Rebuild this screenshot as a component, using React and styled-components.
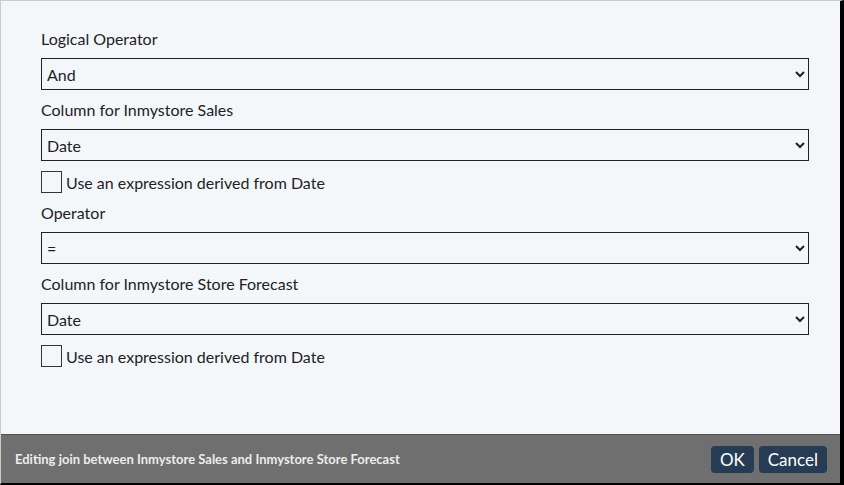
import React from "react"
import styled, { createGlobalStyle } from "styled-components"

const GlobalStyle = createGlobalStyle`
  html, body {
    margin: 0;
    padding: 0;
    background: #f3f7fa;
  }
  * {
    box-sizing: border-box;
  }
`

const fields = [
  { label: "Logical Operator", value: "And" },
  { label: "Column for Inmystore Sales", value: "Date", expression: true },
  { label: "Operator", value: "=" },
  { label: "Column for Inmystore Store Forecast", value: "Date", expression: true },
]

function App() {
  return (
    <>
      <GlobalStyle />
      <Frame>
        <Content>
          {fields.map((f, i) => (
            <React.Fragment key={i}>
              <Label>{f.label}</Label>
              <Select defaultValue={f.value}>
                <option value={f.value}>{f.value}</option>
              </Select>
              {f.expression && (
                <CheckRow>
                  <Check type="checkbox" />
                  <CheckText>Use an expression derived from {f.value}</CheckText>
                </CheckRow>
              )}
            </React.Fragment>
          ))}
        </Content>
        <Footer>
          <Status>Editing join between Inmystore Sales and Inmystore Store Forecast</Status>
          <Buttons>
            <Button>OK</Button>
            <Button>Cancel</Button>
          </Buttons>
        </Footer>
      </Frame>
    </>
  )
}

export default App

const Frame = styled.div`
  width: 844px;
  height: 485px;
  display: flex;
  flex-direction: column;
  border-top: 1px solid #c9cbcd;
  border-left: 1px solid #c9cbcd;
  border-right: 4px solid #000;
  border-bottom: 2px solid #000;
  background: #f3f7fa;
  font-family: Lato, "Noto Sans", sans-serif;
  color: #1e2226;
`
const Content = styled.div`
  flex: 1;
  display: flex;
  flex-direction: column;
  gap: 10px;
  padding: 28px 31px 0 40px;
`
const Label = styled.div`
  font-size: 16px;
  line-height: 19px;
  height: 19px;
`
const Select = styled.select`
  width: 100%;
  height: 32px;
  border: 1px solid #222;
  border-radius: 0;
  background: #f3f7fa;
  font-family: Lato, "Noto Sans", sans-serif;
  font-size: 16px;
  color: #1e2226;
  padding: 0 1px;
  outline: none;
`
const CheckRow = styled.label`
  display: flex;
  align-items: center;
  gap: 4px;
  height: 22px;
`
const Check = styled.input`
  appearance: none;
  margin: 0;
  width: 21px;
  height: 22px;
  border: 1px solid #333;
  background: #f3f7fa;
`
const CheckText = styled.span`
  font-size: 16px;
  line-height: 19px;
`
const Footer = styled.div`
  height: 49px;
  display: flex;
  align-items: center;
  justify-content: space-between;
  padding: 0 13px 0 14px;
  background: #6e6f6e;
  border-top: 1px solid #4e4f4f;
`
const Status = styled.div`
  font-size: 13px;
  font-weight: 700;
  color: #ececec;
`
const Buttons = styled.div`
  display: flex;
  gap: 5px;
`
const Button = styled.button`
  height: 27px;
  padding: 0 9px;
  border: none;
  border-radius: 4px;
  background: #263c54;
  color: #ffffff;
  font-family: Lato, "Noto Sans", sans-serif;
  font-size: 17px;
`
